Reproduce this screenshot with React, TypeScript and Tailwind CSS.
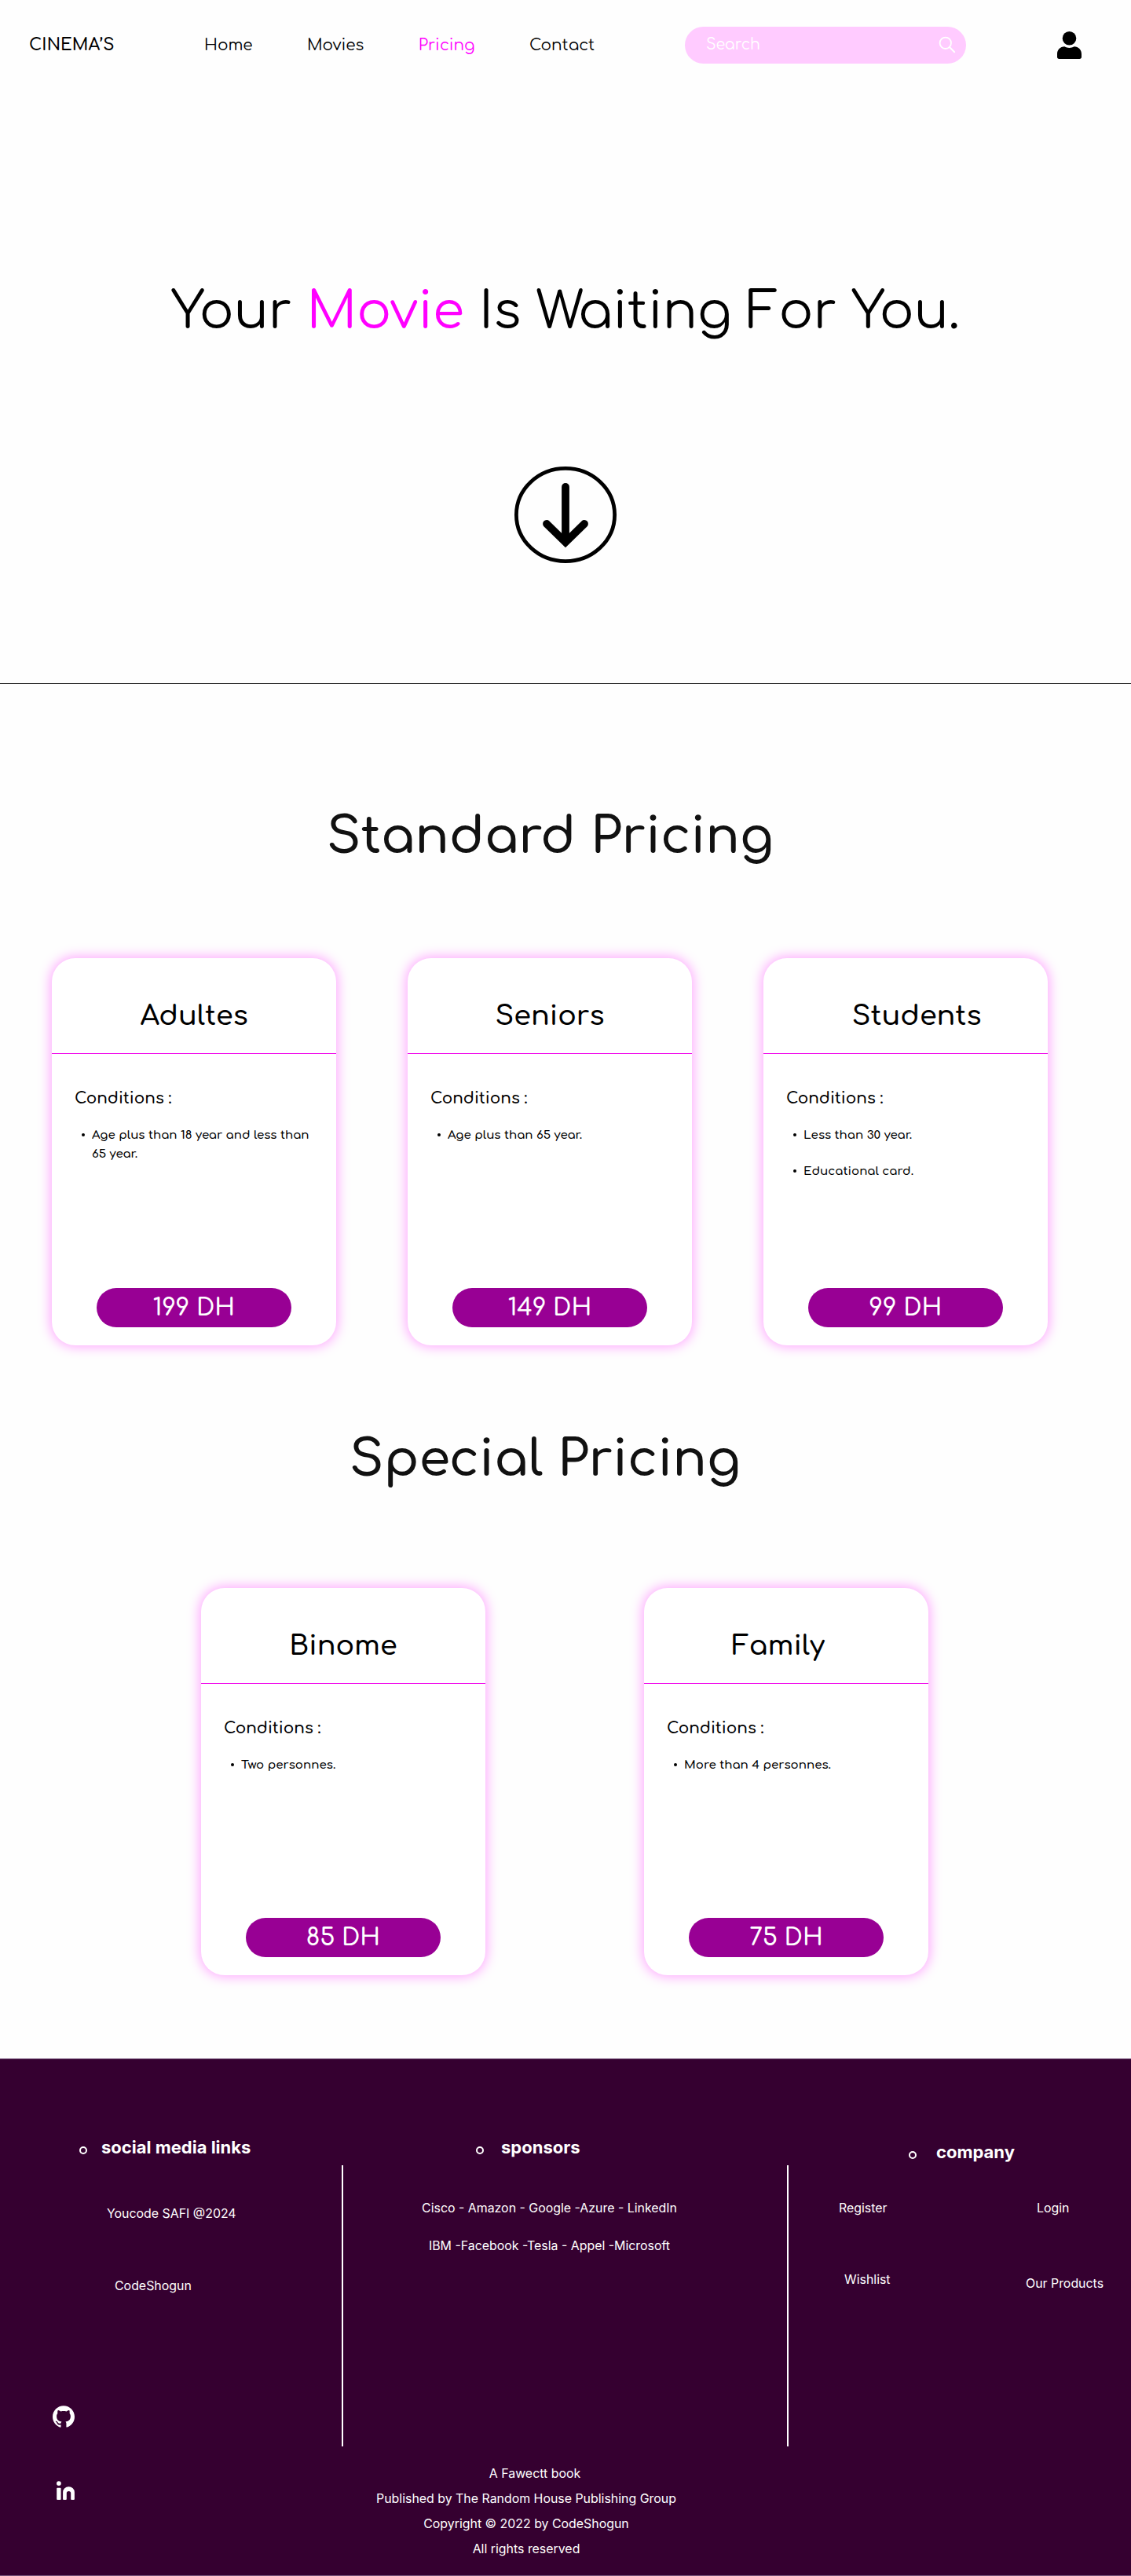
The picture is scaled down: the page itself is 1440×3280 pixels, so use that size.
import type { ReactNode } from "react";
import { SiGithub } from "react-icons/si";

type Plan = {
  title: string;
  conditions: string[];
  price: string;
  titleClass?: string;
};

const standardPlans: Plan[] = [
  { title: "Adultes", conditions: ["Age plus than 18 year and less than 65 year."], price: "199 DH" },
  { title: "Seniors", conditions: ["Age plus than 65 year."], price: "149 DH" },
  { title: "Students", conditions: ["Less than 30 year.", "Educational card."], price: "99 DH", titleClass: "pl-7" },
];

const specialPlans: Plan[] = [
  { title: "Binome", conditions: ["Two personnes."], price: "85 DH" },
  { title: "Family", conditions: ["More than 4 personnes."], price: "75 DH", titleClass: "pr-5" },
];

function SearchIcon() {
  return (
    <svg className="h-[22px] w-[22px]" viewBox="0 0 22 22" fill="none" stroke="#fff" strokeWidth="1.8">
      <circle cx="8.8" cy="8.8" r="7.2" />
      <path d="M14 14l6.2 6.2" strokeWidth="2" strokeLinecap="round" />
    </svg>
  );
}

function UserIcon() {
  return (
    <svg className="h-[35px] w-[31px]" viewBox="0 0 31 35" fill="#000">
      <circle cx="15.5" cy="8.8" r="8.8" />
      <path d="M9.4 19.3c1.9 1.2 3.9 1.7 6.1 1.7s4.2-.5 6.1-1.7c5.6 0 9.4 4.3 9.4 9.5v3.7c0 1.600-.9 2.500-2.500 2.500H2.500C.9 35 0 34.100 0 32.500v-3.700c0-5.200 3.800-9.500 9.400-9.500z" />
    </svg>
  );
}

function DownArrow() {
  return (
    <svg className="h-[123px] w-[131px]" viewBox="0 0 131 123" fill="none" stroke="#000">
      <ellipse cx="65" cy="61.5" rx="62.6" ry="59.1" strokeWidth="4.8" />
      <path d="M65 26v68" strokeWidth="9.8" strokeLinecap="round" />
      <path d="M41 73l24 23.500 24-23.500" strokeWidth="9.8" strokeLinecap="round" strokeLinejoin="miter" />
    </svg>
  );
}

function LinkedInIcon() {
  return (
    <svg className="h-6 w-[23px]" viewBox="0 0 23 24" fill="#fff">
      <circle cx="2.9" cy="3.1" r="2.9" />
      <rect x="0.2" y="8.7" width="5.4" height="15.2" rx="1" />
      <path d="M8.1 22.9v-8.3a7.4 7.4 0 0 1 14.8 0v8.3q0 1-1 1h-2.700q-1 0-1-1v-7.300a2.700 2.700 0 0 0-5.400 0v7.300q0 1-1 1H9.100q-1 0-1-1z" />
    </svg>
  );
}

function PlanCard({ plan }: { plan: Plan }) {
  return (
    <article className="flex h-[493px] w-[362px] flex-col rounded-[30px] bg-white shadow-[0_0_15px_2px_rgba(255,0,255,0.35)]">
      <h3
        className={`h-[121px] pt-[54px] text-center text-[35px] leading-10 font-semibold ${plan.titleClass ?? ""}`}
      >
        {plan.title}
      </h3>
      <div className="h-px bg-[#f000ea]" />
      <div className="flex-1 pt-[45px] pr-6 pl-7">
        <h4 className="pl-px text-[20px] leading-6 font-semibold">Conditions :</h4>
        <ul className="mt-[23px] flex flex-col gap-[22px]">
          {plan.conditions.map((c) => (
            <li key={c} className="flex gap-[9px] pl-2.5 text-[15px] leading-6 font-semibold tracking-[0.02px]">
              <span className="mt-[9px] h-1 w-1 shrink-0 rounded-full bg-black" />
              <span>{c}</span>
            </li>
          ))}
        </ul>
      </div>
      <div className="mx-auto mb-[23px] flex h-[50px] w-[248px] items-center justify-center rounded-full bg-[#980094] pt-0.5 text-[30px] leading-none font-semibold text-white">
        {plan.price}
      </div>
    </article>
  );
}

function FooterHeading({ className, children }: { className: string; children: ReactNode }) {
  return (
    <h5 className={`flex h-7 items-center text-[22px] leading-7 font-bold ${className}`}>
      <span className="mt-2 h-2.5 w-2.5 rounded-full border-2 border-white" />
      <span>{children}</span>
    </h5>
  );
}

export default function App() {
  return (
    <div className="h-[3280px] w-[1440px] overflow-hidden bg-[#fefefe] font-['Comfortaa','Lato',sans-serif] text-black">
      <header className="flex h-[115px] items-center pl-[37px]">
        <div className="w-[223px] text-[21px] leading-none font-semibold tracking-[0.1px]">CINEMA’S</div>
        <nav className="flex w-[612px] gap-[69.3px] text-[20px] leading-6">
          <a>Home</a>
          <a>Movies</a>
          <a className="text-[#ff00ff]">Pricing</a>
          <a>Contact</a>
        </nav>
        <div className="flex h-[47px] w-[358px] items-center justify-between rounded-full bg-[#ffcbff] pr-[13px] pb-[2px] pl-[27px] text-[19px] leading-6 text-white">
          <span>Search</span>
          <SearchIcon />
        </div>
        <div className="ml-[116px]">
          <UserIcon />
        </div>
      </header>

      <section className="flex h-[755px] flex-col items-center pt-[242px]">
        <h1 className="text-[65px] leading-[80px] whitespace-nowrap">
          Your <span className="text-[#ff00ff]">Movie</span> Is Waiting For You.
        </h1>
        <div className="mt-[157px]">
          <DownArrow />
        </div>
      </section>
      <div className="h-px bg-black" />

      <main>
        <h2 className="pt-[155px] pl-[416px] text-[64px] leading-[80px] font-semibold text-[#111111]">Standard Pricing</h2>
        <div className="mt-[114px] flex gap-[91px] pl-[66px]">
          {standardPlans.map((p) => (
            <PlanCard key={p.title} plan={p} />
          ))}
        </div>
        <h2 className="pt-[106px] pl-[445px] text-[64px] leading-[80px] font-semibold text-[#111111]">Special Pricing</h2>
        <div className="mt-[123px] flex gap-[202px] pl-[256px]">
          {specialPlans.map((p) => (
            <PlanCard key={p.title} plan={p} />
          ))}
        </div>
      </main>

      <footer className="mt-[106px] flex h-[659px] border-y border-[#76527a] bg-[#350030] font-['Inter',sans-serif] text-[15.9px] leading-6 text-white">
        <div className="flex w-[435px] flex-col pt-[98px]">
          <FooterHeading className="gap-[18px] pl-[101px]">social media links</FooterHeading>
          <p className="mt-[59px] pl-[136px]">Youcode SAFI @2024</p>
          <p className="mt-[68px] pl-[146px]">CodeShogun</p>
          <SiGithub className="mt-[140px] ml-[67px] h-7 w-7" />
          <div className="mt-[68px] ml-[72px]">
            <LinkedInIcon />
          </div>
        </div>
        <div className="mt-[135px] h-[358px] w-0.5 bg-white" />
        <div className="flex w-[565px] flex-col pt-[98px]">
          <FooterHeading className="gap-[22px] pl-[169px]">sponsors</FooterHeading>
          <div className="mt-[52px] flex w-[525px] flex-col gap-6 text-center">
            <p>Cisco - Amazon - Google -Azure - LinkedIn</p>
            <p>IBM -Facebook -Tesla - Appel -Microsoft</p>
          </div>
          <div className="mt-[262px] w-[466px] text-center leading-8">
            <p className="pl-[22px]">A Fawectt book</p>
            <p>Published by The Random House Publishing Group</p>
            <p>Copyright © 2022 by CodeShogun</p>
            <p>All rights reserved</p>
          </div>
        </div>
        <div className="mt-[135px] h-[358px] w-0.5 bg-white" />
        <div className="flex w-[436px] flex-col pt-[104px]">
          <FooterHeading className="gap-[25px] pl-[153px]">company</FooterHeading>
          <div className="mt-[46px] flex pl-px">
            <div className="flex w-[238px] flex-col gap-[67px] pl-[63px]">
              <a>Register</a>
              <a className="pl-[7px]">Wishlist</a>
            </div>
            <div className="flex flex-col gap-[72px] pl-[63px]">
              <a className="pl-[14px]">Login</a>
              <a>Our Products</a>
            </div>
          </div>
        </div>
      </footer>
    </div>
  );
}
